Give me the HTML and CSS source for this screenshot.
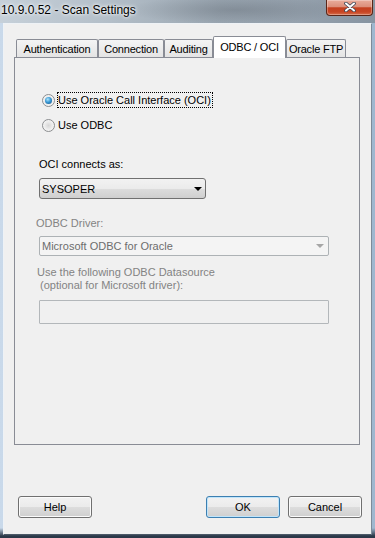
FILE: index.html
```html
<!DOCTYPE html>
<html lang="en">
<head>
<meta charset="UTF-8">
<meta name="viewport" content="width=device-width, initial-scale=1.0">
<title>Scan Settings</title>
<link rel="stylesheet" href="styles.css">
</head>
<body>

<div class="window">
  <div class="titlebar">
    <span class="title">10.9.0.52 - Scan Settings</span>
    <span class="close-btn">
      <svg width="12" height="10" viewBox="0 0 12 10">
        <path d="M2 1.5 L10 8.5 M10 1.5 L2 8.5" stroke="#3a4656" stroke-width="3.6" stroke-linecap="round"/>
        <path d="M2 1.5 L10 8.5 M10 1.5 L2 8.5" stroke="#fff" stroke-width="2" stroke-linecap="round"/>
      </svg>
    </span>
  </div>

  <div class="client">
    <div class="tabview">
      <div class="tabs">
        <div class="tab tab-auth">Authentication</div>
        <div class="tab tab-conn">Connection</div>
        <div class="tab tab-audit">Auditing</div>
        <div class="tab tab-odbc active">ODBC / OCI</div>
        <div class="tab tab-ftp">Oracle FTP</div>
      </div>

      <div class="panel">
        <div class="radio-group">
          <div class="radio-row">
            <span class="radio checked"></span>
            <span class="radio-text focused">Use Oracle Call Interface (OCI)</span>
          </div>
          <div class="radio-row">
            <span class="radio"></span>
            <span class="radio-text">Use ODBC</span>
          </div>
        </div>

        <div class="label">OCI connects as:</div>
        <div class="combo combo-short">
          <span class="combo-text">SYSOPER</span>
          <span class="arrow"></span>
        </div>

        <div class="label disabled driver-label">ODBC Driver:</div>
        <div class="combo combo-wide disabled">
          <span class="combo-text">Microsoft ODBC for Oracle</span>
          <span class="arrow"></span>
        </div>

        <div class="label disabled dsn-label">Use the following ODBC Datasource<br>&nbsp;(optional for Microsoft driver):</div>
        <div class="textbox disabled"></div>
      </div>
    </div>

    <div class="footer">
      <button class="btn">Help</button>
      <button class="btn default ok">OK</button>
      <button class="btn">Cancel</button>
    </div>
  </div>
</div>

</body>
</html>
```

FILE: styles.css
```css
body {
  margin: 0;
  font-family: "Liberation Sans", Arial, sans-serif;
  font-size: 11px;
  color: #000;
}

.window {
  width: 375px;
  height: 538px;
  display: flex;
  flex-direction: column;
  overflow: hidden;
  background:
    linear-gradient(to bottom, rgba(0,0,0,0) 528px, #2b3848 536px),
    linear-gradient(90deg, #c9d9ea 0, #b9cde2 120px, #9fb7cf 375px);
}

/* title bar (aero glass) */
.titlebar {
  height: 23px;
  display: flex;
  align-items: flex-start;
  background:
    radial-gradient(ellipse 110px 14px at 235px 10px, rgba(90, 98, 108, 0.35), rgba(90, 98, 108, 0) 100%),
    linear-gradient(90deg, #c6d0d9 0, #b3bec8 110px, #9aa6b1 220px, #95a1ad 300px, #8794a1 375px);
}

.title {
  padding: 3px 0 0 1px;
  font-size: 12px;
  line-height: 14px;
  text-shadow: 0 0 5px #fff, 0 0 3px #fff;
}

.close-btn {
  margin-left: auto;
  margin-right: 2px;
  width: 47px;
  height: 16px;
  box-sizing: border-box;
  display: flex;
  align-items: center;
  justify-content: center;
  padding-bottom: 2px;
  border: 1px solid #5a2618;
  border-top: none;
  border-radius: 0 0 4px 4px;
  background: linear-gradient(to bottom, #e9ac9b 0%, #dc8f7a 45%, #c4401f 52%, #c84625 80%, #d7714e 100%);
  box-shadow: inset 0 0 0 1px rgba(255, 255, 255, 0.3);
}

/* client area */
.client {
  flex: 1;
  margin: 0 3px 3px 3px;
  display: flex;
  flex-direction: column;
  background: #f0f0f0;
  border: 1px solid;
  border-color: #eef2f6 #7d8b99 #4a5866 #eef2f6;
}

.tabview {
  flex: 1;
  display: flex;
  flex-direction: column;
  margin: 12px 11px 0 10px;
}

.tabs {
  position: relative;
  z-index: 1;
  display: flex;
  align-items: flex-end;
  height: 22px;
  padding-left: 2px;
  margin-bottom: -1px;
}

.tab {
  height: 18px;
  margin-bottom: 1px;
  box-sizing: border-box;
  display: flex;
  align-items: center;
  justify-content: center;
  border: 1px solid #898c95;
  border-bottom: none;
  border-radius: 2px 2px 0 0;
  background: linear-gradient(to bottom, #f4f4f4, #e4e4e4);
  white-space: nowrap;
  letter-spacing: -0.2px;
}

.tab-auth { width: 82px; }
.tab-conn { width: 66px; }
.tab-audit { width: 49px; }
.tab-odbc { width: 73px; }
.tab-ftp { width: 60px; }

.tab.active {
  height: 22px;
  margin-bottom: 0;
  padding-bottom: 2px;
  background: #fff;
}

.panel {
  flex: 1;
  display: flex;
  flex-direction: column;
  align-items: flex-start;
  padding: 34px 0 0 24px;
  border: 1px solid #898c95;
  background: #f0f0f0;
}

/* radio buttons */
.radio-group {
  display: flex;
  flex-direction: column;
  gap: 9px;
  margin-left: 3px;
}

.radio-row {
  display: flex;
  align-items: center;
  height: 16px;
}

.radio {
  width: 13px;
  height: 13px;
  box-sizing: border-box;
  display: flex;
  align-items: center;
  justify-content: center;
  border: 1px solid #8c8e90;
  border-radius: 50%;
  background: radial-gradient(circle at 50% 50%, #d6d6d6 0, #ebebeb 45%, #fdfdfd 100%);
}

.radio.checked::after {
  content: "";
  width: 7px;
  height: 7px;
  border-radius: 50%;
  background: radial-gradient(circle at 40% 35%, #b0e6fc 0, #3a9ad6 45%, #0d4c82 100%);
}

.radio-text {
  margin-left: 2px;
  padding: 0 1px 0 0;
  line-height: 14px;
  border: 1px dotted transparent;
}

.radio-text.focused {
  border-color: #000;
}

/* labels and fields */
.label {
  line-height: 15px;
  margin-top: 24px;
}

.label.disabled {
  color: #838383;
}

.driver-label {
  margin-top: 17px;
  margin-left: -3px;
}

.dsn-label {
  margin-top: 10px;
  margin-left: -2px;
  line-height: 13px;
}

.combo {
  display: flex;
  align-items: center;
  box-sizing: border-box;
  padding-left: 2px;
  border: 1px solid #707070;
  border-radius: 3px;
  background: linear-gradient(to bottom, #f2f2f2 0%, #ebebeb 50%, #dddddd 50%, #cfcfcf 100%);
}

.combo-short {
  width: 167px;
  height: 21px;
  margin-top: 6px;
}

.combo-wide {
  width: 290px;
  height: 20px;
  margin-top: 5px;
}

.arrow {
  margin-left: auto;
  margin-right: 3px;
  width: 0;
  height: 0;
  border-left: 4px solid transparent;
  border-right: 4px solid transparent;
  border-top: 4px solid #000;
}

.combo.disabled {
  border-color: #adb2b5;
  border-radius: 2px;
  background: #f4f4f4;
  color: #6d6d6d;
}

.combo.disabled .arrow {
  margin-right: 4px;
  border-top-color: #a6a6a6;
}

.textbox {
  width: 290px;
  height: 24px;
  margin-top: 8px;
  box-sizing: border-box;
  border: 1px solid #b3b7ba;
  border-radius: 1px;
  background: #f0f0f0;
}

/* dialog buttons */
.footer {
  display: flex;
  gap: 8px;
  margin: 51px 0 16px 0;
  padding: 0 9px 0 14px;
}

.btn {
  width: 74px;
  height: 22px;
  padding: 0;
  box-sizing: border-box;
  border: 1px solid #707070;
  border-radius: 3px;
  background: linear-gradient(to bottom, #f2f2f2 0%, #ebebeb 50%, #dddddd 50%, #cfcfcf 100%);
  box-shadow: inset 0 0 0 1px #fbfbfb;
  font: inherit;
  color: #000;
}

.btn.ok {
  margin-left: auto;
}

.btn.default {
  border-color: #3c7fb1;
  box-shadow: inset 0 0 0 1px #c0e5fb;
}
```
